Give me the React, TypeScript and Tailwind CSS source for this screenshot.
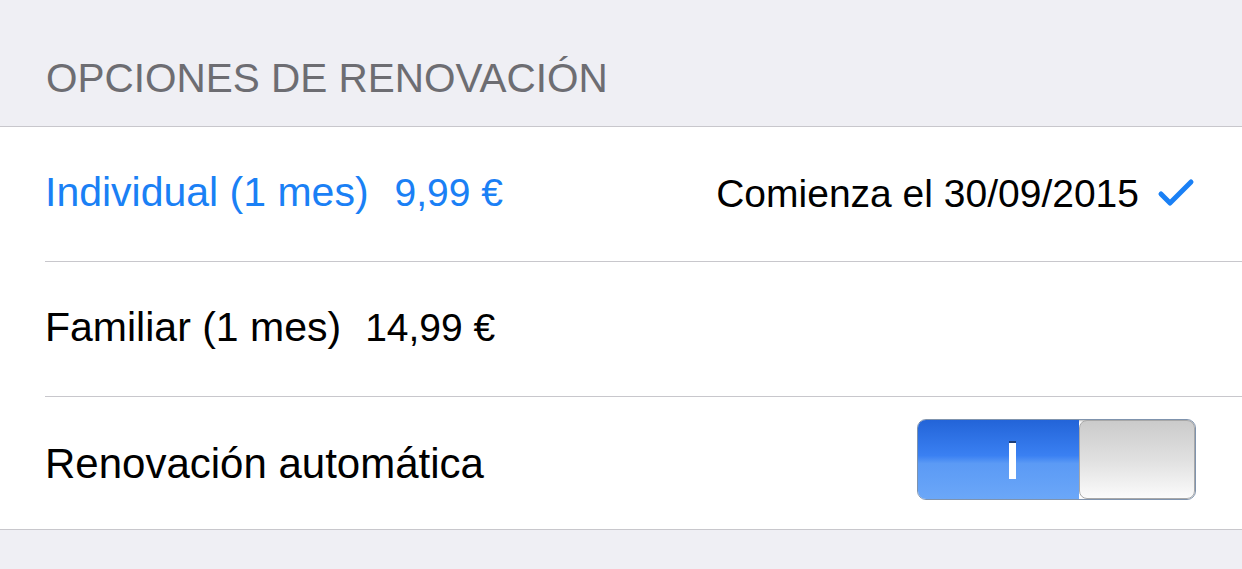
import React from "react";

const Row: React.FC<{ children: React.ReactNode; h: string; last?: boolean }> = ({ children, h, last }) => (
  <div className="pl-[45px] bg-white">
    <div className={`${h} flex items-center pr-[45px] ${last ? "" : "border-b border-[#c8c7cc]"}`}>
      {children}
    </div>
  </div>
);

export default function App() {
  return (
    <div className="w-[1242px] h-[569px] bg-[#efeff4] font-['Liberation_Sans',Arial,sans-serif] overflow-hidden">
      {/* Header */}
      <div className="h-[126px] flex items-center pl-[46px] pt-[30px]">
        <span className="text-[40.5px] text-[#6d6d72]">OPCIONES DE RENOVACIÓN</span>
      </div>

      <div className="border-t border-b border-[#c8c7cc] bg-white">
        <Row h="h-[135px]">
          <span className="text-[41px] text-[#1a80f5] pb-[2px]">
            Individual (1 mes)
            <span className="ml-[26px] text-[39px]">9,99 €</span>
          </span>
          <div className="ml-auto flex items-center gap-[18px] pr-[2px]">
            <span className="text-[39px] text-black">Comienza el 30/09/2015</span>
            <svg width="38" height="30" viewBox="0 0 38 30" className="mb-[2px]">
              <path d="M4 16 L13 25 L34 4" fill="none" stroke="#1a80f5" strokeWidth="5" strokeLinecap="round" strokeLinejoin="round" />
            </svg>
          </div>
        </Row>
        <Row h="h-[135px]">
          <span className="text-[41px] text-black pb-[2px]">
            Familiar (1 mes)
            <span className="ml-[24px] text-[39px]">14,99 €</span>
          </span>
        </Row>
        <Row h="h-[132px]" last>
          <span className="text-[42px] text-black">Renovación automática</span>
          <div className="ml-auto mr-[1px] mb-[7px] w-[279px] h-[81px] rounded-[9px] border border-[#7f93ad] overflow-hidden flex shadow-[inset_0_1px_2px_rgba(0,0,0,0.3)]">
            <div className="w-[161px] h-full flex items-center justify-center pl-[28px] bg-[linear-gradient(to_bottom,#2364d8_0%,#3a80f2_45%,#5b9af5_55%,#6ba7f8_100%)]">
              <div className="w-[7px] h-[38px] bg-white border-t-2 border-[#1d3f7a]" />
            </div>
            <div className="flex-1 h-full rounded-[8px] border border-[#a8a8a8] bg-[linear-gradient(to_bottom,#cbcbcb_0%,#e0e0e0_50%,#fbfbfb_100%)]" />
          </div>
        </Row>
      </div>
    </div>
  );
}
